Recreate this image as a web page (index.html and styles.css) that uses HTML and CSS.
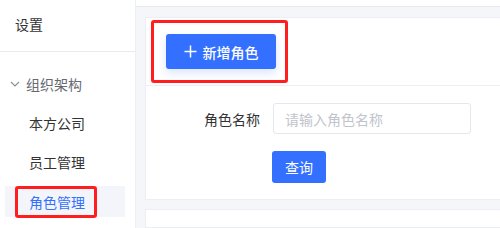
FILE: index.html
```html
<!DOCTYPE html>
<html lang="zh">
<head>
<meta charset="utf-8">
<link rel="stylesheet" href="styles.css">
</head>
<body>
<div class="layout">
  <aside class="sidebar">
    <div class="sidebar-head">设置</div>
    <nav class="menu">
      <div class="menu-group">
        <svg class="chev" width="10" height="6" viewBox="0 0 10 6"><path d="M1 1l4 4 4-4" fill="none" stroke="#888c94" stroke-width="1.1"/></svg>
        <span>组织架构</span>
      </div>
      <div class="menu-item">本方公司</div>
      <div class="menu-item">员工管理</div>
      <div class="menu-item active">角色管理</div>
    </nav>
    <div class="mark mark-side"></div>
  </aside>
  <main class="main">
    <div class="topbar"></div>
    <section class="card card-actions">
      <button class="btn btn-add">
        <svg width="13" height="13" viewBox="0 0 13 13"><path d="M6.5 0.5v12M0.5 6.5h12" stroke="#fff" stroke-width="1.5"/></svg>
        <span>新增角色</span>
      </button>
      <div class="mark mark-add"></div>
    </section>
    <section class="card card-form">
      <div class="form-row">
        <label class="form-label">角色名称</label>
        <input class="form-input" type="text" placeholder="请输入角色名称">
      </div>
      <div class="form-row">
        <span class="form-label"></span>
        <button class="btn btn-query">查询</button>
      </div>
    </section>
    <section class="card card-list"></section>
  </main>
</div>
</body>
</html>
```

FILE: styles.css
```css
* { box-sizing: border-box; }
html, body {
  margin: 0;
  width: 500px;
  height: 228px;
  overflow: hidden;
  background: #fff;
  font-family: "Noto Sans CJK SC", "Noto Sans", sans-serif;
  font-size: 14px;
  color: #333;
}
.layout {
  display: flex;
  height: 228px;
  overflow: hidden;
}
.sidebar {
  position: relative;
  width: 136px;
  flex: none;
  background: #fff;
  border-right: 1px solid #eceef2;
}
.sidebar-head {
  height: 52px;
  padding: 14px 0 0 15px;
  line-height: 20px;
  border-bottom: 1px solid #e8eaee;
  color: #333;
}
.menu {
  display: flex;
  flex-direction: column;
  padding: 16px 0 0 5px;
  gap: 8px;
}
.menu-group {
  display: flex;
  align-items: center;
  height: 31px;
  padding-left: 5px;
  gap: 6px;
  color: #666a70;
}
.menu-item {
  height: 31px;
  width: 120px;
  line-height: 33px;
  padding-left: 24px;
  color: #333;
}
.menu-item + .menu-item {
  margin-top: 0;
}
.menu-item.active {
  margin-top: 1px;
  background: #f3f5fb;
  color: #3370ff;
}
.mark {
  position: absolute;
  border: 3px solid #ff1d1d;
  border-radius: 3px;
  pointer-events: none;
}
.mark-side {
  left: 15px;
  top: 186px;
  width: 82px;
  height: 32px;
}
.main {
  flex: 1;
  background: #f5f6fa;
  padding-left: 9px;
  display: flex;
  flex-direction: column;
}
.topbar {
  height: 7px;
  margin-left: -9px;
  background: #fff;
  border-bottom: 1px solid #e8eaef;
  flex: none;
}
.card {
  background: #fff;
  border: 1px solid #eceef3;
  border-right: none;
  flex: none;
}
.card-actions {
  position: relative;
  margin-top: 10px;
  height: 69px;
  padding: 16px 0 0 20px;
}
.mark-add {
  left: 5px;
  top: 2px;
  width: 137px;
  height: 63px;
}
.btn {
  border: none;
  border-radius: 3px;
  background: #3370ff;
  color: #fff;
  font-family: inherit;
  font-size: 14px;
  display: flex;
  align-items: center;
  justify-content: center;
  cursor: pointer;
}
.btn-add {
  width: 110px;
  height: 35px;
  gap: 6px;
  font-weight: 500;
  box-shadow: 0 4px 10px rgba(51, 112, 255, 0.18);
}
.card-form {
  border-top: none;
  height: 114px;
  padding: 17px 0 0 14px;
  display: flex;
  flex-direction: column;
  gap: 17px;
}
.form-row {
  display: flex;
  align-items: center;
}
.form-label {
  width: 100px;
  text-align: right;
  margin-right: 13px;
  color: #333;
}
.form-input {
  width: 198px;
  height: 31px;
  border: 1px solid #e4e7ed;
  border-radius: 3px;
  padding: 0 11px;
  font-family: inherit;
  font-size: 14px;
  outline: none;
}
.form-input::placeholder {
  color: #c0c4cc;
}
.btn-query {
  width: 54px;
  height: 32px;
  margin-left: -1px;
}
.card-list {
  margin-top: 9px;
  height: 19px;
}
```
